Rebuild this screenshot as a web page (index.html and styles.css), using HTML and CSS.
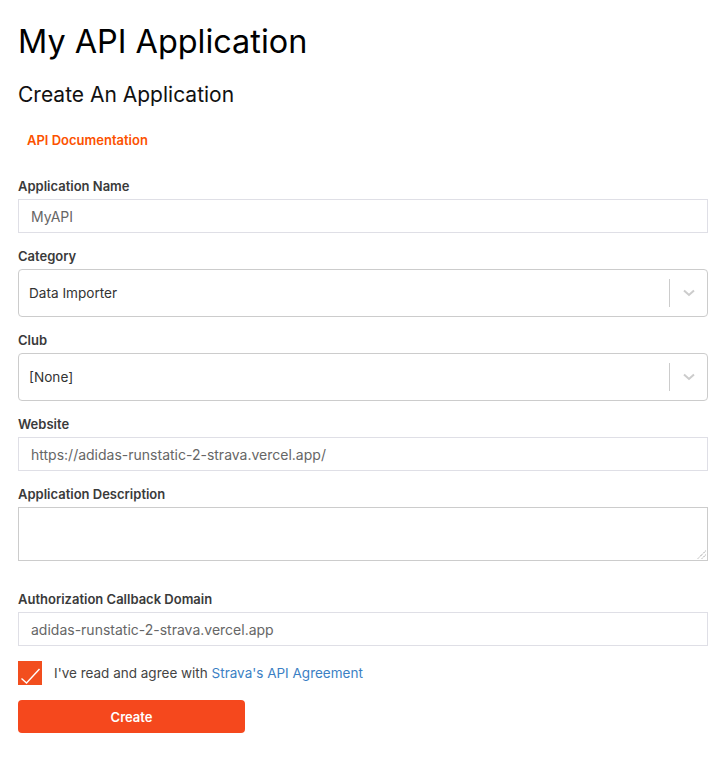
FILE: index.html
```html
<!DOCTYPE html>
<html>
<head>
<meta charset="utf-8">
<link rel="stylesheet" href="styles.css">
</head>
<body>
<div class="page">
  <h1 class="title">My API Application</h1>
  <h2 class="subtitle">Create An Application</h2>
  <a class="doc-link" href="#">API Documentation</a>
  <form class="form">
    <div class="field">
      <label class="label">Application Name</label>
      <div class="input">MyAPI</div>
    </div>
    <div class="field">
      <label class="label">Category</label>
      <div class="select">
        <span class="select-value">Data Importer</span>
        <span class="select-sep"></span>
        <span class="select-arrow"><svg width="14" height="10" viewBox="0 0 14 10"><path d="M2 2.5 L7 7 L12 2.5" fill="none" stroke="#cccccc" stroke-width="2"/></svg></span>
      </div>
    </div>
    <div class="field">
      <label class="label">Club</label>
      <div class="select">
        <span class="select-value">[None]</span>
        <span class="select-sep"></span>
        <span class="select-arrow"><svg width="14" height="10" viewBox="0 0 14 10"><path d="M2 2.5 L7 7 L12 2.5" fill="none" stroke="#cccccc" stroke-width="2"/></svg></span>
      </div>
    </div>
    <div class="field">
      <label class="label">Website</label>
      <div class="input">https://adidas-runstatic-2-strava.vercel.app/</div>
    </div>
    <div class="field field-desc">
      <label class="label">Application Description</label>
      <div class="textarea">
        <svg class="grip" width="9" height="9" viewBox="0 0 9 9"><path d="M8.5 1 L1 8.5 M8.5 5 L5 8.5" stroke="#777" stroke-width="1" fill="none" stroke-dasharray="1 1"/></svg>
      </div>
    </div>
    <div class="field field-last">
      <label class="label">Authorization Callback Domain</label>
      <div class="input">adidas-runstatic-2-strava.vercel.app</div>
    </div>
    <div class="agree">
      <span class="checkbox"><svg width="24" height="24" viewBox="0 0 24 24"><path d="M3.5 17.5 L8.5 22 L21.5 8" fill="none" stroke="#fff" stroke-width="1.4"/></svg></span>
      <span class="agree-text">I've read and agree with <a class="agree-link" href="#">Strava's API Agreement</a></span>
    </div>
    <button class="btn" type="button">Create</button>
  </form>
</div>
</body>
</html>
```
FILE: styles.css
```css
* { box-sizing: border-box; }
html, body { margin: 0; padding: 0; background: #fff; }
body { font-family: Inter, "Noto Sans", sans-serif; color: #333; }
.page { padding: 0 15px 0 18px; }
.title {
  margin: 0;
  padding-top: 21px;
  font-size: 32.4px;
  font-weight: 400;
  line-height: 42px;
  color: #000;
}
.subtitle {
  margin: 0;
  padding-top: 17px;
  font-size: 21px;
  font-weight: 400;
  line-height: 30px;
  color: #111;
}
.doc-link {
  display: block;
  margin: 21px 0 0 9px;
  font-size: 13px;
  font-weight: 600;
  color: #fc5200;
  text-decoration: none;
  line-height: 18px;
}
.form { display: flex; flex-direction: column; margin-top: 29px; }
.field { display: flex; flex-direction: column; margin-bottom: 15px; }
.field-desc { margin-bottom: 30px; }
.field-last { margin-bottom: 15px; }
.label {
  font-size: 13px;
  font-weight: 600;
  color: #3a3a3a;
  line-height: 16px;
  margin-bottom: 5px;
}
.input {
  height: 34px;
  border: 1px solid #dfdfe6;
  padding: 0 12px;
  display: flex;
  align-items: center;
  font-size: 14px;
  color: #666;
}
.select {
  height: 48px;
  border: 1px solid #ccc;
  border-radius: 4px;
  display: flex;
  align-items: center;
}
.select-value { flex: 1; padding-left: 10px; font-size: 13.6px; color: #333; }
.select-sep { width: 1px; height: 28px; background: #ccc; }
.select-arrow { width: 37px; display: flex; justify-content: center; align-items: center; }
.textarea {
  height: 54px;
  border: 1px solid #ccc;
  position: relative;
}
.grip { position: absolute; right: 1px; bottom: 1px; }
.agree { display: flex; align-items: center; gap: 12px; }
.checkbox {
  width: 24px;
  height: 24px;
  background: #f24e1e;
  display: block;
}
.checkbox svg { display: block; }
.agree-text { font-size: 13.5px; color: #444; }
.agree-link { color: #3b7fc4; text-decoration: none; }
.btn {
  margin-top: 15px;
  width: 227px;
  height: 33px;
  border: none;
  border-radius: 4px;
  background: #f5481d;
  color: #fff;
  font-family: Inter, "Noto Sans", sans-serif;
  font-size: 13px;
  font-weight: 600;
  cursor: pointer;
}
```
